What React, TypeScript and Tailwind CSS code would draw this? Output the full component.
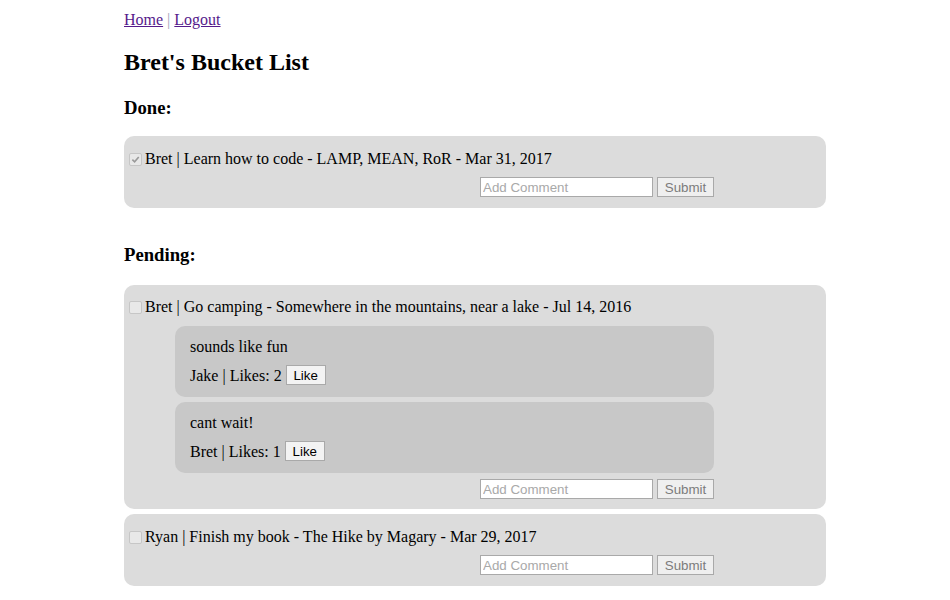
import React from "react";

type Comment = { text: string; author: string; likes: number };

type Item = {
  owner: string;
  title: string;
  desc: string;
  date: string;
  done: boolean;
  comments: Comment[];
};

const doneItems: Item[] = [
  {
    owner: "Bret",
    title: "Learn how to code",
    desc: "LAMP, MEAN, RoR",
    date: "Mar 31, 2017",
    done: true,
    comments: [],
  },
];

const pendingItems: Item[] = [
  {
    owner: "Bret",
    title: "Go camping",
    desc: "Somewhere in the mountains, near a lake",
    date: "Jul 14, 2016",
    done: false,
    comments: [
      { text: "sounds like fun", author: "Jake", likes: 2 },
      { text: "cant wait!", author: "Bret", likes: 1 },
    ],
  },
  {
    owner: "Ryan",
    title: "Finish my book",
    desc: "The Hike by Magary",
    date: "Mar 29, 2017",
    done: false,
    comments: [],
  },
];

const CheckBox = ({ checked }: { checked: boolean }) => (
  <span className="mr-[3px] ml-[1px] inline-flex h-[13px] w-[13px] items-center justify-center rounded-[2px] border border-[#c6c6c6] bg-[#e8e8e8]">
    {checked && (
      <svg width="9" height="9" viewBox="0 0 10 10">
        <path d="M1.5 5.2 L4 7.6 L8.6 2.2" fill="none" stroke="#9a9a9a" strokeWidth="1.8" />
      </svg>
    )}
  </span>
);

const CommentForm = () => (
  <div className="flex h-[20px] justify-end gap-[4px] pr-[112px]">
    <input
      placeholder="Add Comment"
      className="h-[20px] w-[173px] border border-[#a9a9a9] bg-white px-[2px] font-['Liberation_Sans',Arial,sans-serif] text-[13.33px] outline-none placeholder:text-[#a9a9a9]"
    />
    <button className="h-[20px] w-[57px] border border-[#a9a9a9] bg-[#efefef] font-['Liberation_Sans',Arial,sans-serif] text-[13.33px] text-[#7c7c7c]">
      Submit
    </button>
  </div>
);

const ItemCard = ({ item }: { item: Item }) => {
  const hasComments = item.comments.length > 0;
  return (
    <div
      className={
        hasComments
          ? "flex flex-col rounded-[10px] bg-[#dcdcdc] pb-[10px] pl-[4px] pt-[11px]"
          : "flex flex-col rounded-[10px] bg-[#dcdcdc] pb-[11px] pl-[4px] pt-[12px]"
      }
    >
      <div className="flex h-[20px] items-center pt-[2px]">
        <CheckBox checked={item.done} />
        <span>
          {item.owner} | {item.title} - {item.desc} - {item.date}
        </span>
      </div>
      {hasComments && (
        <div className="mt-[10px] flex flex-col gap-[5px] pl-[47px] pr-[112px]">
          {item.comments.map((c, i) => (
            <div key={i} className="flex flex-col rounded-[10px] bg-[#c8c8c8] pb-[12px] pl-[15px] pt-[10px]">
              <div className="flex h-[20px] items-center pt-[2px]">{c.text}</div>
              <div className="mt-[9px] flex h-[20px] items-center">
                <span className="pt-[2px]">
                  {c.author} | Likes: {c.likes}
                </span>
                <button className="ml-[4px] h-[20px] w-[40px] border border-[#a9a9a9] bg-[#f3f3f3] font-['Liberation_Sans',Arial,sans-serif] text-[13.33px] text-black">
                  Like
                </button>
              </div>
            </div>
          ))}
        </div>
      )}
      <div className={hasComments ? "mt-[6px]" : "mt-[9px]"}>
        <CommentForm />
      </div>
    </div>
  );
};

const App = () => {
  return (
    <div className="min-h-screen bg-white font-['Liberation_Serif','Times_New_Roman',serif] text-[16px] text-black">
      <div className="ml-[124px] w-[702px] pt-[10px]">
        <div className="flex h-[20px] items-center">
          <a href="#" className="text-[#551a8b] underline">
            Home
          </a>
          <span className="mx-[4px] text-[#9aa3b8]">|</span>
          <a href="#" className="text-[#551a8b] underline">
            Logout
          </a>
        </div>
        <h1 className="mt-[18px] flex h-[28px] items-center text-[24px] font-bold">Bret's Bucket List</h1>
        <h3 className="mt-[22px] flex h-[20px] items-center pt-[1px] text-[18.7px] font-bold">Done:</h3>
        <div className="mt-[18px] flex flex-col gap-[5px]">
          {doneItems.map((item, i) => (
            <ItemCard key={i} item={item} />
          ))}
        </div>
        <h3 className="mt-[37px] flex h-[20px] items-center pt-[1px] text-[18.7px] font-bold">Pending:</h3>
        <div className="mt-[20px] flex flex-col gap-[5px]">
          {pendingItems.map((item, i) => (
            <ItemCard key={i} item={item} />
          ))}
        </div>
      </div>
    </div>
  );
};

export default App;
